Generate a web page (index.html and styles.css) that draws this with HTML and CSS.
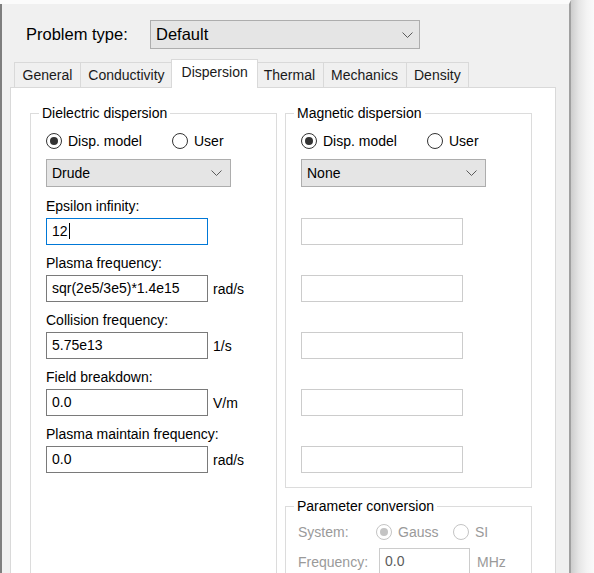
FILE: index.html
```html
<!DOCTYPE html>
<html lang="en">
<head>
    <meta charset="UTF-8">
    <title>Material properties</title>
    <link rel="stylesheet" href="styles.css">
</head>
<body>
    <div class="edge"></div>
    <div class="dialog">
        <!-- Problem type selector -->
        <div class="problem-row">
            <span class="problem-label">Problem type:</span>
            <div class="combo combo-problem">
                <span>Default</span>
                <svg class="chevron" width="11" height="6" viewBox="0 0 11 6"><polyline points="0.5,0.5 5.5,5.5 10.5,0.5"/></svg>
            </div>
        </div>

        <div class="tabs">
            <div class="tab">General</div>
            <div class="tab">Conductivity</div>
            <div class="tab active">Dispersion</div>
            <div class="tab">Thermal</div>
            <div class="tab">Mechanics</div>
            <div class="tab">Density</div>
        </div>

        <div class="panel">
            <!-- Dielectric dispersion -->
            <fieldset class="group">
                <legend>Dielectric dispersion</legend>
                <div class="group-body">
                    <div class="radio-row">
                        <span class="radio-item model"><span class="radio on"></span>Disp. model</span>
                        <span class="radio-item"><span class="radio"></span>User</span>
                    </div>
                    <div class="combo combo-model">
                        <span>Drude</span>
                        <svg class="chevron" width="11" height="6" viewBox="0 0 11 6"><polyline points="0.5,0.5 5.5,5.5 10.5,0.5"/></svg>
                    </div>
                    <div class="fields">
                        <div class="field">
                            <div class="field-label">Epsilon infinity:</div>
                            <div class="field-row">
                                <div class="textbox focus">12<span class="caret"></span></div>
                            </div>
                        </div>
                        <div class="field">
                            <div class="field-label">Plasma frequency:</div>
                            <div class="field-row">
                                <div class="textbox">sqr(2e5/3e5)*1.4e15</div>
                                <span class="unit">rad/s</span>
                            </div>
                        </div>
                        <div class="field">
                            <div class="field-label">Collision frequency:</div>
                            <div class="field-row">
                                <div class="textbox">5.75e13</div>
                                <span class="unit">1/s</span>
                            </div>
                        </div>
                        <div class="field">
                            <div class="field-label">Field breakdown:</div>
                            <div class="field-row">
                                <div class="textbox">0.0</div>
                                <span class="unit">V/m</span>
                            </div>
                        </div>
                        <div class="field">
                            <div class="field-label">Plasma maintain frequency:</div>
                            <div class="field-row">
                                <div class="textbox">0.0</div>
                                <span class="unit">rad/s</span>
                            </div>
                        </div>
                    </div>
                </div>
            </fieldset>

            <div class="column">
                <!-- Magnetic dispersion -->
                <fieldset class="group">
                    <legend>Magnetic dispersion</legend>
                    <div class="group-body">
                        <div class="radio-row">
                            <span class="radio-item model"><span class="radio on"></span>Disp. model</span>
                            <span class="radio-item"><span class="radio"></span>User</span>
                        </div>
                        <div class="combo combo-model">
                            <span>None</span>
                            <svg class="chevron" width="11" height="6" viewBox="0 0 11 6"><polyline points="0.5,0.5 5.5,5.5 10.5,0.5"/></svg>
                        </div>
                        <div class="fields">
                            <div class="field"><div class="field-label"></div><div class="field-row"><div class="textbox off"></div></div></div>
                            <div class="field"><div class="field-label"></div><div class="field-row"><div class="textbox off"></div></div></div>
                            <div class="field"><div class="field-label"></div><div class="field-row"><div class="textbox off"></div></div></div>
                            <div class="field"><div class="field-label"></div><div class="field-row"><div class="textbox off"></div></div></div>
                            <div class="field"><div class="field-label"></div><div class="field-row"><div class="textbox off"></div></div></div>
                        </div>
                    </div>
                </fieldset>

                <!-- Parameter conversion (disabled) -->
                <fieldset class="group group-convert">
                    <legend>Parameter conversion</legend>
                    <div class="group-body">
                        <div class="sys-row">
                            <span class="sys-label">System:</span>
                            <span class="radio-item gauss"><span class="radio on off"></span>Gauss</span>
                            <span class="radio-item"><span class="radio off"></span>SI</span>
                        </div>
                        <div class="freq-row">
                            <span class="freq-label">Frequency:</span>
                            <div class="textbox off freq">0.0</div>
                            <span class="unit off-text">MHz</span>
                        </div>
                    </div>
                </fieldset>
            </div>
        </div>
    </div>
    <div class="shade"></div>
</body>
</html>
```

FILE: styles.css
```css
body {
    margin: 0;
    width: 594px;
    height: 573px;
    overflow: hidden;
    display: flex;
    background-color: #fbfbfb;
    font-family: "Liberation Sans", Arial, sans-serif;
    font-size: 14px;
    color: #000;
}

.edge {
    width: 2px;
    margin-top: 4px;
    background-color: #7e7e7e;
}

.dialog {
    width: 569px;
    box-sizing: border-box;
    padding-left: 8px;
    border-top: 4px solid #fbfbfb;
    border-right: 2px solid #a0a0a0;
    background-color: #f0f0f0;
}

.shade {
    flex: 1;
    background: linear-gradient(to right, #cdcdcd, #e6e6e6 8px, #f4f4f4 16px, #fafafa);
}

/* top row */
.problem-row {
    display: flex;
    align-items: center;
    margin-top: 16px;
}

.problem-label {
    width: 124px;
    margin-left: 16px;
    font-size: 16.5px;
}

.combo {
    display: flex;
    align-items: center;
    justify-content: space-between;
    box-sizing: border-box;
    height: 28px;
    padding: 0 8px 0 5px;
    border: 1px solid #adadad;
    background-color: #e5e5e5;
}

.combo-problem {
    width: 270px;
    height: 29px;
    padding-right: 6px;
    font-size: 16.5px;
}

.combo-model {
    width: 185px;
    margin-bottom: 11px;
}

.chevron polyline {
    fill: none;
    stroke: #5a5a5a;
    stroke-width: 1;
}

/* tab strip */
.tabs {
    display: flex;
    align-items: flex-end;
    height: 28px;
    margin-top: 10px;
    padding-left: 4px;
}

.tab {
    box-sizing: border-box;
    height: 25px;
    line-height: 24px;
    padding: 0 7.5px;
    margin-left: -1px;
    border: 1px solid #d9d9d9;
    border-bottom: 0;
    background-color: #f0f0f0;
    color: #1a1a1a;
}

.tab:first-child {
    margin-left: 0;
}

.tab.active {
    position: relative;
    z-index: 1;
    height: 29px;
    padding: 0 9.5px 4px;
    margin: 0 -2px -1px -2px;
    background-color: #fff;
}

.panel {
    display: flex;
    gap: 8px;
    width: 546px;
    height: 520px;
    box-sizing: border-box;
    padding: 17px 0 0 19px;
    border: 1px solid #d9d9d9;
    background-color: #fff;
}

.column {
    display: flex;
    flex-direction: column;
}

/* group boxes */
.group {
    width: 247px;
    min-width: 0;
    box-sizing: border-box;
    margin: 0;
    padding: 11px 0 14px;
    border: 1px solid #dcdcdc;
}

.group legend {
    margin-left: 8px;
    padding: 0 3px;
    line-height: 16px;
}

.group-body {
    display: flex;
    flex-direction: column;
    padding: 0 15px;
}

.radio-row {
    display: flex;
    align-items: center;
    height: 18px;
    margin-bottom: 9px;
}

.radio-item {
    display: flex;
    align-items: center;
    gap: 6px;
    line-height: 16px;
}

.radio-item.model {
    width: 126px;
}

.radio {
    display: flex;
    align-items: center;
    justify-content: center;
    width: 16px;
    height: 16px;
    box-sizing: border-box;
    border: 1px solid #333;
    border-radius: 50%;
    background-color: #fff;
}

.radio.on::after {
    content: "";
    width: 8px;
    height: 8px;
    border-radius: 50%;
    background-color: #333;
}

.radio.off {
    border-color: #c4c4c4;
}

.radio.on.off::after {
    background-color: #c4c4c4;
}

.fields {
    display: flex;
    flex-direction: column;
    gap: 10px;
}

.field-label {
    height: 16px;
    line-height: 16px;
    margin-bottom: 4px;
}

.field-row {
    display: flex;
    align-items: center;
    gap: 5px;
}

.textbox {
    width: 162px;
    height: 27px;
    box-sizing: border-box;
    padding-left: 5px;
    line-height: 25px;
    border: 1px solid #7a7a7a;
    background-color: #fff;
    white-space: nowrap;
}

.textbox.focus {
    border-color: #0078d7;
}

.textbox.off {
    border-color: #cccccc;
    color: #5c5c5c;
}

.caret {
    display: inline-block;
    width: 1px;
    height: 16px;
    margin-left: 1px;
    vertical-align: -3px;
    background-color: #000;
}

/* parameter conversion */
.group-convert {
    margin-top: 10px;
    padding-top: 9px;
}

.group-convert .group-body {
    padding: 0 12px;
    color: #9a9a9a;
}

.sys-row {
    display: flex;
    align-items: center;
    height: 18px;
    margin-bottom: 7px;
}

.sys-label {
    width: 78px;
}

.radio-item.gauss {
    width: 77px;
}

.freq-row {
    display: flex;
    align-items: center;
}

.freq-label {
    width: 81px;
}

.textbox.freq {
    width: 91px;
}

.off-text {
    margin-left: 7px;
}
```
